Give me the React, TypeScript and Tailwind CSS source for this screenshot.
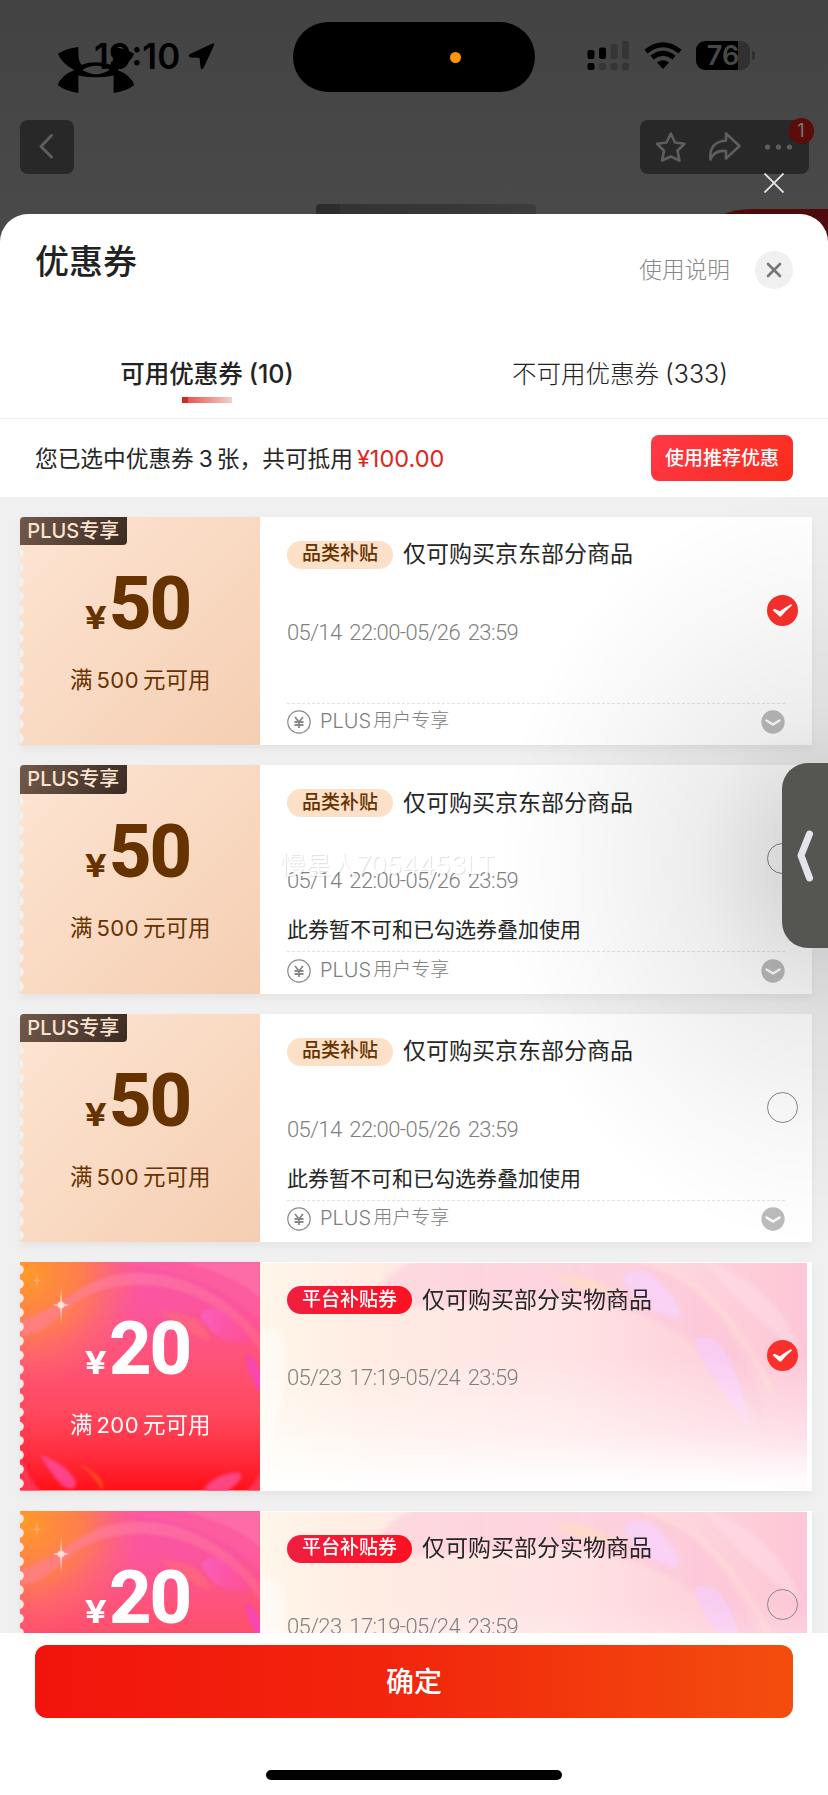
import { X } from 'lucide-react';

interface Coupon {
  type: 'plus' | 'platform';
  amount: number;
  threshold: number;
  tag: string;
  title: string;
  period: string;
  checked: boolean;
  notice?: string;
  footer?: string;
}

const coupons: Coupon[] = [
  { type: 'plus', amount: 50, threshold: 500, tag: '品类补贴', title: '仅可购买京东部分商品', period: '05/14 22:00-05/26 23:59', checked: true, footer: '用户专享' },
  { type: 'plus', amount: 50, threshold: 500, tag: '品类补贴', title: '仅可购买京东部分商品', period: '05/14 22:00-05/26 23:59', checked: false, notice: '此券暂不可和已勾选券叠加使用', footer: '用户专享' },
  { type: 'plus', amount: 50, threshold: 500, tag: '品类补贴', title: '仅可购买京东部分商品', period: '05/14 22:00-05/26 23:59', checked: false, notice: '此券暂不可和已勾选券叠加使用', footer: '用户专享' },
  { type: 'platform', amount: 20, threshold: 200, tag: '平台补贴券', title: '仅可购买部分实物商品', period: '05/23 17:19-05/24 23:59', checked: true },
  { type: 'platform', amount: 20, threshold: 200, tag: '平台补贴券', title: '仅可购买部分实物商品', period: '05/23 17:19-05/24 23:59', checked: false },
];

// Brand mark of the shop page, it slides under the clock
function BrandLogo() {
  return (
    <svg viewBox="0 0 80 48" className="absolute left-[56px] top-[47px] h-[47px] w-[80px]" fill="#000">
      <path d="M1 7 Q9 1.500 22 0 C22 9 22 14 25 18 Q40 13 55 18 C58 14 58 9 58 0 Q71 1.500 79 7 Q75 17 62 23.500 Q76 29 79 39 Q71 45 58 47 V29 Q40 33 22 29 V47 Q9 45 1 39 Q4 29 18 23.500 Q5 17 1 7Z M26 23.500 Q40 32 54 23.500 Q40 15 26 23.500Z" fillRule="evenodd" />
    </svg>
  );
}

function StatusBar() {
  return (
    <div className="flex h-[115px] items-start text-black">
      <div className="flex w-[293px] pl-[94px] pt-[35px]">
        <span className="w-[88px] whitespace-nowrap font-['Inter'] text-[35px] font-semibold leading-[42px]">19:10</span>
        <svg viewBox="0 0 27 27" className="ml-[6px] mt-[8px] h-[27px] w-[27px]">
          <path d="M24.500 0.500 L2 11 Q-1 13.500 3 14.500 L11.500 14.800 L12.500 24 Q13 28 15.500 25 L26 2.500 Q27 -0.500 24.500 0.500Z" />
        </svg>
      </div>
      <div className="mt-[22px] flex h-[70px] w-[242px] items-center rounded-full bg-black pl-[157px]">
        <span className="h-[11px] w-[11px] rounded-full bg-[#ff9500]" />
      </div>
      <svg viewBox="0 0 42 30" className="ml-[52px] mt-[41px] h-[30px] w-[42px]">
        <rect x="0.5" y="9" width="7" height="9" rx="2" />
        <rect x="12" y="6.500" width="7" height="11.500" rx="2" />
        <rect x="23.500" y="3" width="7" height="15" rx="2" fill="#353535" />
        <rect x="35" y="0" width="7" height="18" rx="2" fill="#353535" />
        <rect x="0.5" y="22" width="7" height="7" rx="2" />
        <rect x="12" y="22" width="7" height="7" rx="2.500" fill="#353535" />
        <rect x="23.500" y="22" width="7" height="7" rx="2.500" fill="#353535" />
        <rect x="35" y="22" width="7" height="7" rx="2.500" fill="#353535" />
      </svg>
      <svg viewBox="0 0 38 27" className="ml-[15px] mt-[42px] h-[27px] w-[38px]" fill="none" stroke="#000" strokeWidth="5">
        <path d="M2 9.500 Q19 -4 36 9.500" />
        <path d="M8 15.500 Q19 7 30 15.500" />
        <path d="M19 27 L13 20.500 Q19 16 25 20.500Z" fill="#000" stroke="none" />
      </svg>
      <div className="ml-[14px] mt-[41px] flex items-center">
        <div className="flex h-[29px] w-[54px] items-center justify-center rounded-[9px] bg-[linear-gradient(90deg,#000_77%,#303030_77%)]">
          <span className="font-['Inter'] text-[27px] font-semibold leading-none text-[#484848]">76</span>
        </div>
        <span className="ml-[2px] h-[9px] w-[3px] rounded-r-full bg-[#303030]" />
      </div>
    </div>
  );
}

function PageBackdrop() {
  return (
    <div className="relative h-[248px] bg-[linear-gradient(#434343,#4a4a4a)]">
      <BrandLogo />
      <div className="relative">
        <StatusBar />
      </div>
      <div className="flex justify-between px-[19.500px] pt-[4.500px]">
        <svg viewBox="0 0 54 54" className="h-[54px] w-[54px] rounded-lg bg-[#282828]" fill="none" stroke="#5e5e5e" strokeWidth="3" strokeLinecap="round" strokeLinejoin="round">
          <path d="M31.500 15.500 L21 26.500 L31.500 37" />
        </svg>
        <div className="relative h-[54px] w-[169px] rounded-lg bg-[#282828]">
          <svg viewBox="0 0 169 54" className="h-[54px] w-[169px]" fill="none" stroke="#5e5e5e" strokeWidth="2.600" strokeLinejoin="round">
            <path d="M30.800 13.500 L35 22.500 L44.500 23.800 L37.500 30.700 L39.500 40.500 L30.800 36.500 L22 40.500 L24 30.700 L17 23.800 L26.500 22.500Z" />
            <path d="M86 13.500 L99.500 26 L86 38.500 V31 Q74 30 70.500 39.500 Q68.500 22 86 20.500Z" />
            <g fill="#5e5e5e" stroke="none">
              <circle cx="127.500" cy="27" r="2.600" />
              <circle cx="138.500" cy="27" r="2.600" />
              <circle cx="149.500" cy="27" r="2.600" />
            </g>
          </svg>
          <span className="absolute right-[-5px] top-[-2px] flex h-[26px] w-[25px] items-center justify-center rounded-full bg-[#5c0d09] font-['Inter'] text-[18px] text-[#777]">1</span>
        </div>
      </div>
      <svg viewBox="0 0 20 20" className="absolute left-[764px] top-[173px] h-[20px] w-[20px]" stroke="#e6e6e6" strokeWidth="1.800">
        <path d="M0.500 0.500 L19.500 19.500 M19.500 0.500 L0.500 19.500" />
      </svg>
      <div className="absolute left-[316px] top-[204px] h-[12px] w-[220px] rounded-t bg-[linear-gradient(90deg,#2c2c2c_11%,#333_11%,#373737_60%,#3d3d3d)]" />
      <svg viewBox="0 0 106 39" className="absolute right-0 top-[209px] h-[39px] w-[106px]">
        <path d="M0 6 Q12 0 30 0 H106 V39 H0Z" fill="#4f0a0d" />
      </svg>
    </div>
  );
}

function SheetHeader() {
  return (
    <>
      <div className="flex h-[114px] justify-between px-[35px]">
        <h1 className="mt-[23px] text-[34px] font-medium leading-[50px] text-[#222]">优惠券</h1>
        <div className="mt-[37px] flex h-[38px] items-center gap-[25px]">
          <span className="text-[22.700px] font-light text-[#888]">使用说明</span>
          <button className="flex h-[38px] w-[38px] items-center justify-center rounded-full bg-[#f0f0f0]">
            <X size={24} strokeWidth={2.6} color="#777" />
          </button>
        </div>
      </div>
      <div className="flex h-[91px] border-b border-[#f0f0f0] text-[24.500px]">
        <div className="flex w-1/2 flex-col items-center pt-[28px] font-medium text-[#222]">
          <span className="leading-[36px]">可用优惠券<i className="ml-[6px] font-['Inter'] text-[25px] not-italic">(10)</i></span>
          <span className="mt-[5px] h-[6px] w-[50px] bg-[linear-gradient(90deg,#cf2a20_12%,#e8564e_12%,#f4cfcf)]" />
        </div>
        <div className="flex w-1/2 justify-center pr-[2px] pt-[28px] font-light text-[#222]">
          <span className="leading-[36px]">不可用优惠券<i className="ml-[6px] font-['Inter'] text-[25px] not-italic">(333)</i></span>
        </div>
      </div>
      <div className="flex h-[78px] items-center justify-between px-[35px]">
        <p className="mt-[2px] flex items-baseline text-[22.700px] text-[#262626]">
          您已选中优惠券<i className="ml-[5px] mr-[4px] font-['Inter'] not-italic">3</i>张，共可抵用
          <i className="ml-[4px] font-['Inter'] text-[23.500px] not-italic text-[#e1251b]">¥100.00</i>
        </p>
        <button className="h-[46px] w-[142px] rounded-lg bg-[linear-gradient(135deg,#ff3848,#fa2c19)] pt-[2px] text-[19px] font-medium text-white">使用推荐优惠</button>
      </div>
    </>
  );
}

function PlatformArt() {
  return (
    <svg viewBox="0 0 240 228" preserveAspectRatio="none" className="absolute inset-0 h-full w-full">
      <defs>
        <linearGradient id="base" x1="0" y1="0" x2="0" y2="1">
          <stop offset="0" stopColor="#f955a6" />
          <stop offset="0.200" stopColor="#fb559e" />
          <stop offset="0.420" stopColor="#ff5378" />
          <stop offset="0.650" stopColor="#ff4a60" />
          <stop offset="0.850" stopColor="#ff2c3c" />
          <stop offset="1" stopColor="#ff1018" />
        </linearGradient>
        <radialGradient id="orange" cx="0.020" cy="0.050" r="0.500">
          <stop offset="0" stopColor="#ff9a28" />
          <stop offset="0.500" stopColor="#ff8048" stopOpacity="0.900" />
          <stop offset="1" stopColor="#ff6a6a" stopOpacity="0" />
        </radialGradient>
        <linearGradient id="rim" x1="0" y1="0" x2="1" y2="0">
          <stop offset="0" stopColor="#ff7f86" stopOpacity="0.800" />
          <stop offset="0.500" stopColor="#ff7fa8" stopOpacity="0.550" />
          <stop offset="1" stopColor="#ff7f90" stopOpacity="0.350" />
        </linearGradient>
        <linearGradient id="leaf" x1="0" y1="0" x2="1" y2="0">
          <stop offset="0" stopColor="#f862c6" stopOpacity="0.850" />
          <stop offset="1" stopColor="#ff4ba0" stopOpacity="0.350" />
        </linearGradient>
        <filter id="soften">
          <feGaussianBlur stdDeviation="1.500" />
        </filter>
      </defs>
      <rect width="240" height="228" fill="url(#base)" />
      <rect width="240" height="228" fill="url(#orange)" />
      <g filter="url(#soften)">
        <path d="M0 73 C32 76 45 34 90 26 C160 12 215 50 242 92 V76 C208 34 165 8 110 11 C60 14 42 48 0 58Z" fill="url(#rim)" />
        <path d="M80 0 C150 6 205 22 242 62 V40 C220 18 190 6 160 0Z" fill="#ff5f9c" opacity="0.600" />
        <path d="M160 0 C190 6 220 18 242 38 V0Z" fill="#ff80a8" opacity="0.550" />
        <path d="M181 52 Q192 42 207 52 Q226 66 233 79 Q210 84 194 71 Q184 63 181 52Z" fill="url(#leaf)" />
        <path d="M140 49 Q185 50 190 80 Q165 72 140 49Z" fill="#ff7070" opacity="0.500" />
        <path d="M225 93 Q240 92 246 140 Q228 115 225 93Z" fill="#f545bd" opacity="0.850" />
        <path d="M20 192 Q52 205 56 221 Q54 230 42 223 Q28 208 20 192Z" fill="#ff4a9a" opacity="0.850" />
        <path d="M56 200 Q88 215 82 228 Q72 210 56 200Z" fill="#ff6a1f" opacity="0.600" />
        <path d="M182 228 Q196 210 219 210 Q226 216 205 230Z" fill="#ff4a8c" opacity="0.900" />
        <path d="M0 190 Q6 214 22 230 H0Z" fill="#ff4a78" opacity="0.600" />
        <path d="M242 205 Q236 220 224 230 H242Z" fill="#ff4a78" opacity="0.600" />
      </g>
      <path d="M41 26 L42 41 L49 43 L42 45 L41 62 L40 45 L33 43 L40 41Z" fill="#ffe0d0" opacity="0.800" />
      <circle cx="41" cy="43" r="3.500" fill="#ffe9dd" opacity="0.700" />
      <path d="M17 11 L18 17 L21 18.500 L18 20 L17 26 L16 20 L13 18.500 L16 17Z" fill="#ffc08a" opacity="0.550" />
    </svg>
  );
}

function PlatformSoftArt() {
  return (
    <svg viewBox="0 0 547 226" preserveAspectRatio="none" className="absolute left-0 top-px h-[226px] w-[547px]">
      <defs>
        <linearGradient id="soft" x1="0" y1="0" x2="1" y2="0">
          <stop offset="0" stopColor="#fff6ea" />
          <stop offset="0.200" stopColor="#ffece3" />
          <stop offset="0.550" stopColor="#ffe3e4" />
          <stop offset="1" stopColor="#fdc6d6" />
        </linearGradient>
        <linearGradient id="fade" x1="0" y1="0" x2="0" y2="1">
          <stop offset="0.400" stopColor="#fff" stopOpacity="0" />
          <stop offset="0.750" stopColor="#fff" stopOpacity="0.450" />
          <stop offset="0.970" stopColor="#fff" stopOpacity="0.950" />
        </linearGradient>
        <linearGradient id="band" x1="0" y1="0" x2="1" y2="0">
          <stop offset="0" stopColor="#fdccdc" stopOpacity="0.600" />
          <stop offset="1" stopColor="#fcc2d8" stopOpacity="0.550" />
        </linearGradient>
        <filter id="haze">
          <feGaussianBlur stdDeviation="2" />
        </filter>
      </defs>
      <rect width="547" height="226" fill="url(#soft)" />
      <g filter="url(#haze)">
        <path d="M115 30 C130 8 150 -4 165 -4 H380 C450 20 490 80 515 190 C470 90 410 45 300 35 C230 30 160 60 115 30Z" fill="url(#band)" />
        <path d="M375 -4 C440 12 480 60 512 130" fill="none" stroke="#ffe0d6" strokeWidth="4" opacity="0.600" />
        <path d="M440 -4 C490 10 530 50 540 90 C500 60 470 30 440 -4Z" fill="#ffe0ea" opacity="0.450" />
        <path d="M362 16 Q380 0 398 18 Q425 45 418 55 Q385 50 362 16Z" fill="#f8d2fa" opacity="0.850" />
        <path d="M295 14 Q330 8 358 32 Q320 32 295 14Z" fill="#ffdfbd" opacity="0.600" />
        <path d="M0 66 Q25 60 26 95 Q20 170 0 226Z" fill="#fff" opacity="0.450" />
      </g>
      <path d="M435 78 C437 68 465 75 473 105 Q484 130 488 165 C475 138 440 105 435 78Z" fill="#f8ccf6" opacity="0.850" />
      <rect width="547" height="226" fill="url(#fade)" />
    </svg>
  );
}

function PlusArt() {
  return <div className="absolute inset-0 bg-[linear-gradient(135deg,#fde5d3,#f5ceb2)]" />;
}

// Perforated left border of the ticket
function Perforation({ color }: { color: string }) {
  return (
    <svg className="absolute left-0 top-0 h-full w-[5px]" viewBox="0 0 5 228">
      {Array.from({ length: 16 }, (_, i) => (
        <circle key={i} cx="-1" cy={7.5 + i * 14.25} r="4.8" fill={color} />
      ))}
    </svg>
  );
}

function Radio({ checked }: { checked: boolean }) {
  if (!checked) {
    return <span className="h-[31px] w-[31px] rounded-full border-[1.500px] border-[#888]" />;
  }
  return (
    <svg viewBox="0 0 31 31" className="h-[31px] w-[31px]">
      <circle cx="15.500" cy="15.500" r="15.500" fill="#f9302c" />
      <path d="M5.500 15 L7.500 13.800 L12.800 16.200 Q18 12.500 23.800 9.200 L25.300 10.300 Q19 15.500 14.500 21 Q13.300 22.300 12 21Z" fill="#fff" />
    </svg>
  );
}

function CouponCard({ coupon }: { coupon: Coupon }) {
  const isPlus = coupon.type === 'plus';

  return (
    <div className="relative flex h-[228.500px] w-[792.500px] shrink-0 bg-white shadow-[0_4px_8px_rgba(0,0,0,0.05)]">
      <div className={`relative w-[240.500px] shrink-0 overflow-hidden ${isPlus ? 'text-[#663300]' : 'text-white'}`}>
        {isPlus ? <PlusArt /> : <PlatformArt />}
        <Perforation color={isPlus ? '#f3f0ed' : '#fbe9e9'} />
        {isPlus && (
          <span className="absolute left-0 top-0 flex h-[28.500px] w-[107.500px] items-center justify-center rounded-br rounded-tl bg-[linear-gradient(110deg,#72594a,#3a2b22)] text-[20px] font-medium leading-none text-[#fbe3d0]">
            PLUS专享
          </span>
        )}
        <div className="relative flex h-full flex-col items-center pt-[49px]">
          <div className="flex items-baseline pr-[2px] leading-[76px]">
            <span className="mr-[4px] scale-x-125 font-['Inter'] text-[31px] font-bold">¥</span>
            <span className="font-['Roboto'] text-[74px] font-extrabold tracking-[-2px]">{coupon.amount}</span>
          </div>
          <p className="mt-[7px] h-[34px] pl-[1px] text-[22.500px] leading-[34px]">
            满<i className="mx-[4px] font-['Inter'] text-[22px] not-italic tracking-[0.500px]">{coupon.threshold}</i>元可用
          </p>
        </div>
      </div>
      <div className="relative flex-1">
        {!isPlus && <PlatformSoftArt />}
        <div className="relative h-full pl-[27px] pr-[27px] pt-[23px]">
          <div className="flex h-[30px] items-center">
            <span className={isPlus
              ? 'flex h-[28px] items-center rounded-full bg-[#fde0c8] px-[15px] text-[19px] font-medium text-[#663300]'
              : 'flex h-[28px] items-center rounded-full bg-[linear-gradient(90deg,#ef1f40,#ff1020)] px-[15px] text-[19px] font-medium text-white'}
            >
              {coupon.tag}
            </span>
            <span className="ml-[10px] text-[23px] text-[#262626]">{coupon.title}</span>
          </div>
          <p className="mt-[48px] h-[30px] whitespace-pre font-['Roboto'] text-[22px] font-light leading-[30px] tracking-[-0.600px] text-[#808080] [word-spacing:3px]">{coupon.period}</p>
          <p className="mt-[16px] h-[39px] text-[21px] leading-[36px] text-[#262626]">{coupon.notice}</p>
          {coupon.footer && (
            <div className="flex h-[38px] items-center border-t border-dashed border-[#e2e2e2] text-[#808080]">
              <svg viewBox="0 0 24 24" className="h-[24px] w-[24px]" fill="none" stroke="#888" strokeWidth="1.200">
                <circle cx="12" cy="12" r="11.200" />
                <path d="M8 7 L12 12 L16 7 M12 12 V18 M7.500 12 H16.500 M7.500 15 H16.500" strokeWidth="1.800" />
              </svg>
              <span className="mt-[-2px] ml-[9px] font-['Inter'] text-[20px] font-light">PLUS</span>
              <span className="mt-[-1px] ml-[2px] text-[19px] font-light">{coupon.footer}</span>
              <svg viewBox="0 0 24 24" className="ml-auto h-[24px] w-[24px]">
                <circle cx="12" cy="12" r="11.700" fill="#bcbcbc" />
                <path d="M5.500 10.500 L12 14.500 L18.500 10.500" fill="none" stroke="#fff" strokeWidth="2.400" strokeLinecap="round" strokeLinejoin="round" />
              </svg>
            </div>
          )}
        </div>
        <div className="absolute right-[14px] top-[78px] flex">
          <Radio checked={coupon.checked} />
        </div>
      </div>
    </div>
  );
}

// Assistive handle docked at the right side, with the shadow that spreads over the list
function SideHandle() {
  return (
    <>
      <div className="pointer-events-none absolute left-[478px] top-[497px] h-[900px] w-[350px] bg-[radial-gradient(ellipse_330px_380px_at_100%_41%,rgba(0,0,0,0.2),rgba(0,0,0,0.13)_20%,rgba(0,0,0,0.07)_40%,rgba(0,0,0,0.03)_70%,rgba(0,0,0,0)_100%)]" />
      <div className="absolute right-0 top-[763px] flex h-[185px] w-[46px] items-center justify-center rounded-l-[26px] bg-[#555552]">
        <svg viewBox="0 0 18 52" className="ml-[-1px] h-[52px] w-[18px]" fill="none" stroke="#e4e4ec" strokeWidth="7" strokeLinecap="round" strokeLinejoin="round">
          <path d="M13.500 4 L5 25.500 L13.500 48" />
        </svg>
      </div>
    </>
  );
}

export default function App() {
  return (
    <div className="relative h-[1795px] w-[828px] overflow-hidden bg-white font-['Inter','Noto_Sans_CJK_SC',sans-serif]">
      <PageBackdrop />
      <div className="relative mt-[-34px] flex h-[1581px] flex-col rounded-t-[28px] bg-white">
        <SheetHeader />
        <div className="flex h-[1136px] flex-col items-start gap-[20px] overflow-hidden bg-[#f0f0f0] pl-[19.500px] pt-[19.500px]">
          {coupons.map((coupon, index) => (
            <CouponCard key={index} coupon={coupon} />
          ))}
        </div>
        <div className="flex flex-1 flex-col items-center bg-white pt-[12px]">
          <button className="h-[73px] w-[758px] rounded-xl bg-[linear-gradient(90deg,#f2140c,#f2270c_50%,#f34e0d)] text-[28px] font-medium text-white">确定</button>
          <span className="mt-[52px] h-[10px] w-[296px] rounded-full bg-black" />
        </div>
      </div>
      <SideHandle />
      <span className="pointer-events-none absolute left-[280px] top-[846px] text-[25.500px] text-white [text-shadow:1px_1px_1px_rgba(0,0,0,0.12)]">慢星人7054453LT</span>
    </div>
  );
}
